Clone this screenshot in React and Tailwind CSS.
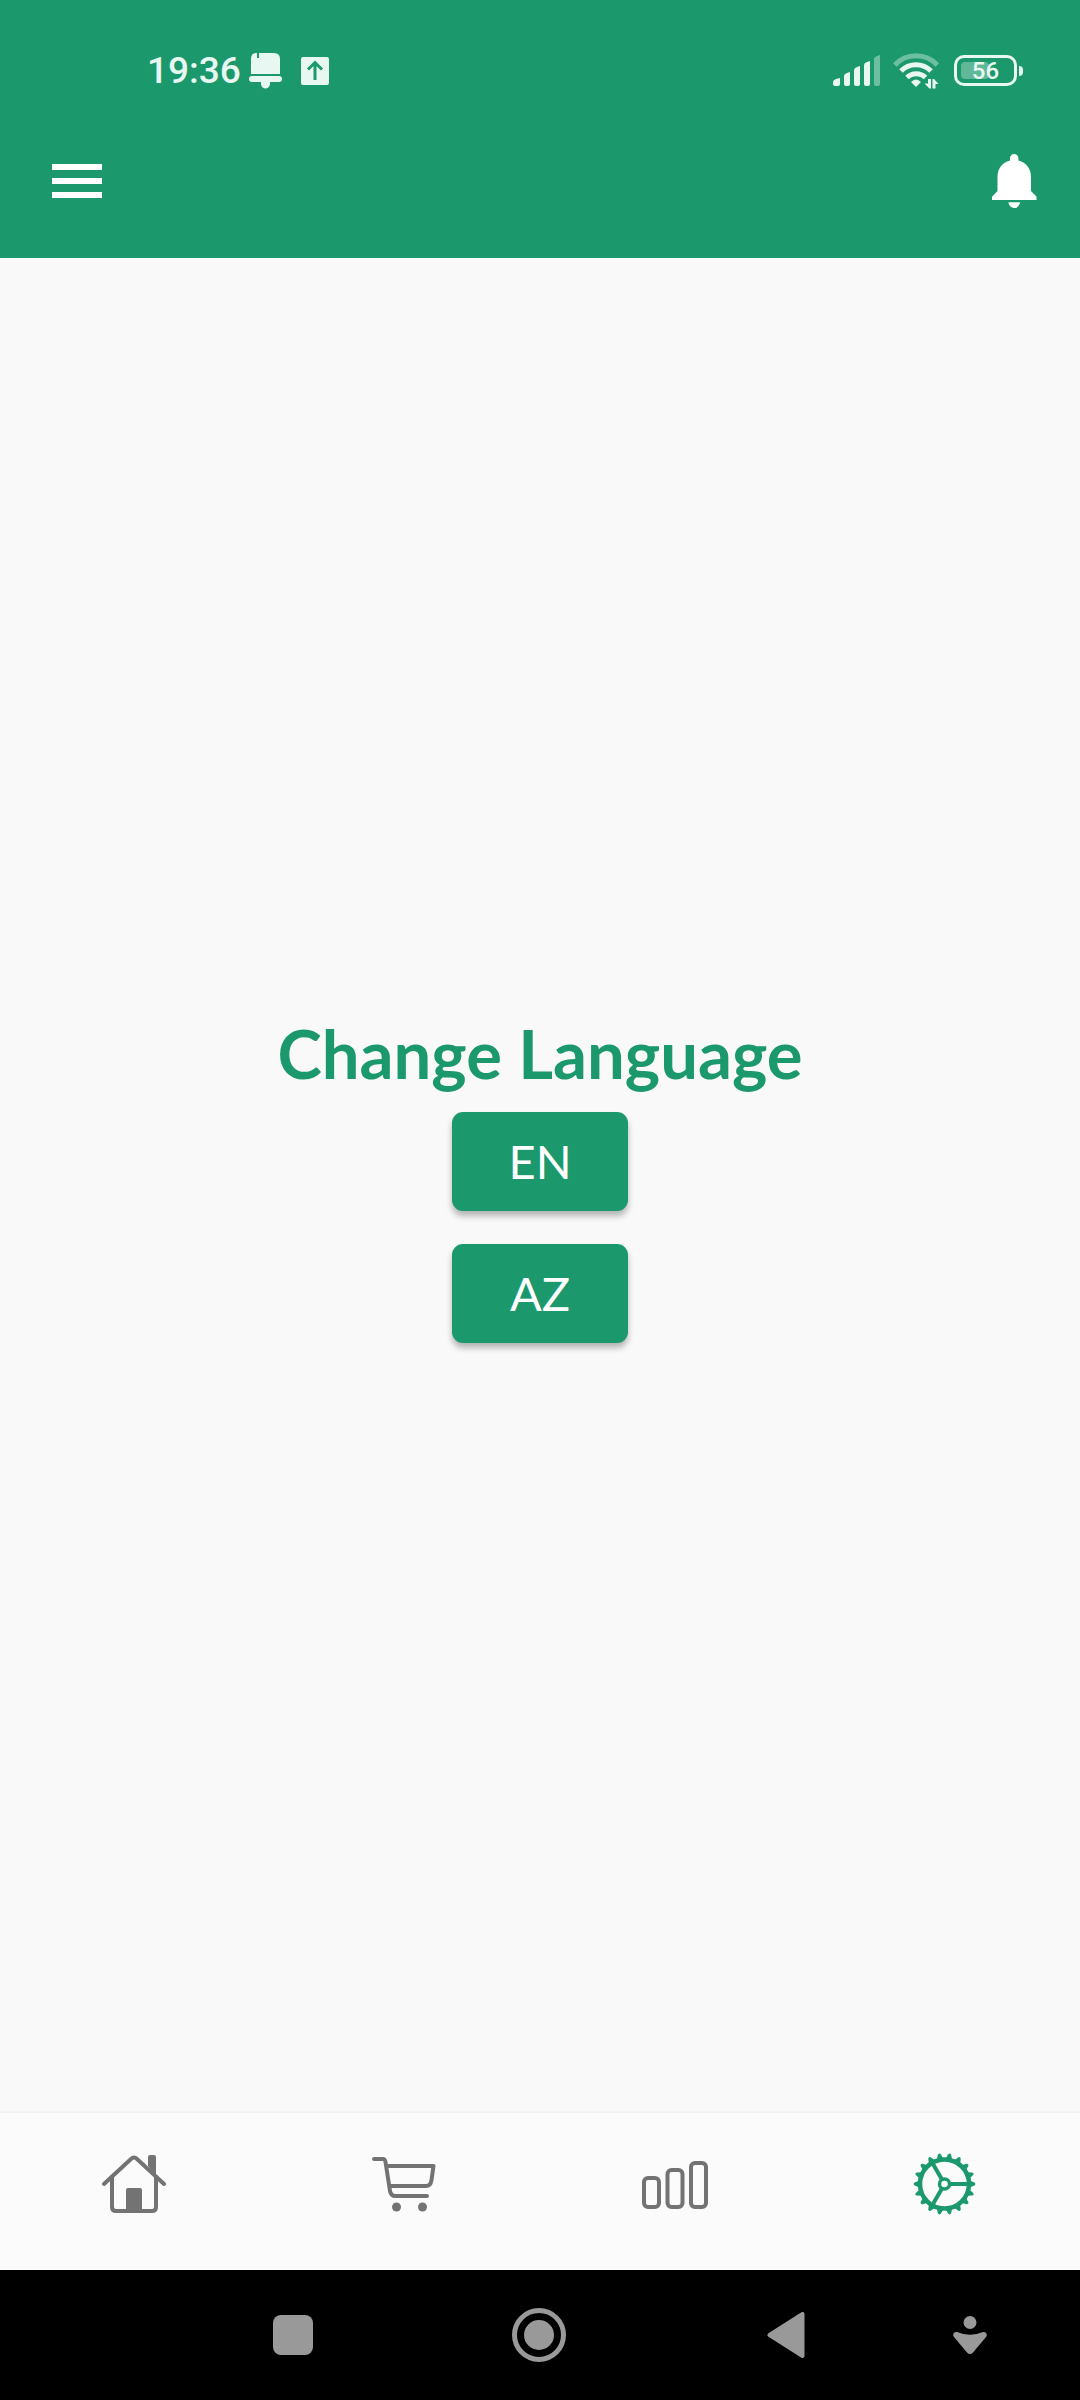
const TEETH = Array.from({ length: 18 }, (_, i) => i * 20);

function StatusBar() {
  return (
    <div className="flex h-[104px] items-center justify-between pl-[147px] pr-[57px] pt-[37px] text-[#e8f7f1]">
      <div className="flex items-center">
        <span className="text-[37px] font-medium leading-none">19:36</span>
        <svg className="ml-2 h-9 w-[34px]" viewBox="0 0 34 36" fill="currentColor" aria-hidden="true">
          <path d="M7 0h1v5h2V0h15q6 0 6 6v15H2V6q0-6 5-6Z" />
          <rect x="0" y="23" width="33" height="6" rx="3" />
          <path d="M12 28h9v2a4.500 5 0 0 1-9 1Z" />
        </svg>
        <svg className="ml-[18px] h-7 w-7" viewBox="0 0 28 28" aria-hidden="true">
          <rect width="28" height="28" rx="2" fill="currentColor" />
          <path d="M14 23V6M7 12.500l7-7 7 7" fill="none" stroke="#1b996d" strokeWidth="3" />
        </svg>
      </div>
      <div className="flex items-center">
        <svg className="h-8 w-12" viewBox="0 0 48 32" fill="currentColor" aria-hidden="true">
          <path d="M0 27q0-2 3-3l4-1v6q0 2-2 2H2q-2 0-2-2Z" />
          <path d="M11 21q0-2 3-3l3-1v12q0 2-2 2h-2q-2 0-2-2Z" />
          <path d="M21 15q0-2 3-3l3-1v18q0 2-2 2h-2q-2 0-2-2Z" />
          <path d="M31 10q0-2 3-3l3-1v23q0 2-2 2h-2q-2 0-2-2Z" />
          <path opacity=".4" d="M41 4q0-2 3-3l3-1v29q0 2-2 2h-2q-2 0-2-2Z" />
        </svg>
        <svg className="ml-3 h-9 w-[47px]" viewBox="0 0 47 36" fill="none" stroke="currentColor" strokeWidth="5" aria-hidden="true">
          <path opacity=".4" d="M1.800 12a29 29 0 0 1 42.500 0" />
          <path d="M8 18a21 21 0 0 1 30 0" />
          <path d="M14 24.500a13 13 0 0 1 18.500 0" />
          <path d="M18 29q5-5 10 0l-5 5Z" fill="currentColor" stroke="none" />
          <path d="M35 26h3v9.500h-1.500L31.500 30.500H35ZM39.500 35.500V26H41l4.500 5h-3v4.500Z" fill="currentColor" stroke="none" />
        </svg>
        <div className="relative ml-[14px] flex h-[31px] w-[63px] items-center justify-center rounded-[10px] border-[3px] border-[#e8f7f1]">
          <div className="absolute left-1 top-1 h-[17px] w-7 rounded-sm bg-[#60b899]" />
          <span className="relative text-[24px] font-medium leading-none">56</span>
        </div>
        <div className="ml-[2px] h-[10px] w-1 rounded-r-sm bg-[#e8f7f1]" />
      </div>
    </div>
  );
}

function AppBar() {
  return (
    <div className="flex h-[154px] items-center justify-between pl-[52px] pr-[43px] text-white">
      <button type="button" aria-label="Open menu">
        <svg className="h-[34px] w-[50px]" viewBox="0 0 50 34" fill="currentColor" aria-hidden="true">
          <path d="M0 0h50v6H0zM0 14h50v6H0zM0 28h50v6H0z" />
        </svg>
      </button>
      <button type="button" aria-label="Notifications">
        <svg className="h-[54px] w-[45px]" viewBox="0 0 45 54" fill="currentColor" aria-hidden="true">
          <path d="M18 6.500V4.200a4.200 4.200 0 0 1 8.400 0v2.300C34.500 8.500 39 15 39 23v14l5.500 5.700V46H0v-3.300L5.500 37V23C5.500 15 10 8.500 18 6.500Z" />
          <path d="M16.500 48.300H28a5.750 5.750 0 0 1-11.500 0Z" />
        </svg>
      </button>
    </div>
  );
}

function LanguageButton({ children }) {
  return (
    <div className="flex h-[132px] items-center">
      <button
        type="button"
        className="h-[99px] w-44 rounded-[11px] bg-[#1b996d] text-[47px] leading-none text-white shadow-[0_5px_6px_rgba(0,0,0,0.28)]"
      >
        {children}
      </button>
    </div>
  );
}

function HomeIcon() {
  return (
    <svg className="size-[66px]" viewBox="0 0 66 66" fill="none" stroke="currentColor" strokeWidth="4" strokeLinecap="round" strokeLinejoin="round" aria-hidden="true">
      <path d="M2 33 29 8q3-3 6 0l27 25" />
      <path d="M10 26v30q0 4 4 4h36q4 0 4-4V26" />
      <path d="M24 61V39q0-2 2-2h12q2 0 2 2v22ZM46 15V6q0-2 2-2h4q2 0 2 2v19Z" fill="currentColor" stroke="none" />
    </svg>
  );
}

function CartIcon() {
  return (
    <svg className="size-[66px]" viewBox="0 0 66 66" fill="none" stroke="currentColor" strokeWidth="4" strokeLinecap="round" strokeLinejoin="round" aria-hidden="true">
      <path d="M2 8h9q2 0 2.500 3l4.500 29q1 5 5 5h32" />
      <path d="M15 15h46.500l-2 14q-.800 6-5.500 6H18" />
      <circle cx="24.500" cy="56" r="4.500" fill="currentColor" stroke="none" />
      <circle cx="50.500" cy="56" r="4.500" fill="currentColor" stroke="none" />
    </svg>
  );
}

function ChartIcon() {
  return (
    <svg className="size-[66px]" viewBox="0 0 66 66" fill="none" stroke="currentColor" strokeWidth="4" aria-hidden="true">
      <rect x="2" y="27" width="15" height="29" rx="4" />
      <rect x="25.500" y="19" width="15" height="37" rx="4" />
      <rect x="49" y="12" width="15" height="44" rx="4" />
    </svg>
  );
}

function GearIcon() {
  return (
    <svg className="size-[66px]" viewBox="0 0 66 66" fill="none" stroke="currentColor" strokeWidth="4" aria-hidden="true">
      <g transform="translate(32.500 33)">
        <circle r="24.500" strokeWidth="4.500" />
        <circle r="5" strokeWidth="3.500" />
        {[0, 120, 240].map((angle) => (
          <path key={angle} d="M6 0h19" strokeWidth="4" transform={`rotate(${angle})`} />
        ))}
        {TEETH.map((angle) => (
          <path key={angle} d="M25-3.500 30-1.400q1.800 1.400 0 2.800L25 3.500Z" fill="currentColor" stroke="none" transform={`rotate(${angle})`} />
        ))}
      </g>
    </svg>
  );
}

const TABS = [
  { label: "Home", Icon: HomeIcon },
  { label: "Cart", Icon: CartIcon },
  { label: "Statistics", Icon: ChartIcon },
  { label: "Settings", Icon: GearIcon, active: true },
];

function TabBar() {
  return (
    <nav className="grid grid-cols-4 border-t-2 border-[#f3f3f3] bg-[#fbfbfb] pb-[53px] pt-[38px]">
      {TABS.map(({ label, Icon, active }) => (
        <button
          key={label}
          type="button"
          aria-label={label}
          aria-current={active ? "page" : undefined}
          className={active ? "flex justify-center text-[#1b996d]" : "flex justify-center text-[#737373]"}
        >
          <Icon />
        </button>
      ))}
    </nav>
  );
}

function SystemBar() {
  return (
    <div className="grid h-[130px] grid-cols-[2fr_2fr_2fr_1fr] items-center bg-black pl-[170px] pr-12 text-[#999999]">
      <button type="button" aria-label="Recent apps" className="flex justify-center">
        <span className="size-10 rounded-lg bg-[#999999]" />
      </button>
      <button type="button" aria-label="Home screen" className="flex justify-center">
        <svg className="size-[54px]" viewBox="0 0 54 54" aria-hidden="true">
          <circle cx="27" cy="27" r="24.500" fill="none" stroke="currentColor" strokeWidth="5" />
          <circle cx="27" cy="27" r="15" fill="currentColor" />
        </svg>
      </button>
      <button type="button" aria-label="Back" className="flex justify-center">
        <svg className="h-[46px] w-[38px]" viewBox="0 0 38 46" fill="currentColor" stroke="currentColor" strokeWidth="4" strokeLinejoin="round" aria-hidden="true">
          <path d="M2.500 23 35.500 2v42Z" />
        </svg>
      </button>
      <button type="button" aria-label="Hide navigation" className="flex justify-center">
        <svg className="h-[38px] w-[34px]" viewBox="0 0 34 38" fill="currentColor" aria-hidden="true">
          <circle cx="17" cy="6.500" r="6.500" />
          <path d="M4 16q13 5.500 26 0c3-.500 5 2.500 3 5L20 36.500q-3 3-6 0L1 21c-2-2.500 0-5.500 3-5Z" />
        </svg>
      </button>
    </div>
  );
}

export default function App() {
  return (
    <div className="flex min-h-screen flex-col bg-[#f9f9f9] font-['Roboto',sans-serif]">
      <header className="bg-[#1b996d]">
        <StatusBar />
        <AppBar />
      </header>
      <main className="flex grow flex-col items-center justify-center font-['Lato',sans-serif]">
        <h1 className="text-[67px] font-bold leading-[86px] text-[#1b996d]">Change Language</h1>
        <LanguageButton>EN</LanguageButton>
        <LanguageButton>AZ</LanguageButton>
      </main>
      <TabBar />
      <SystemBar />
    </div>
  );
}
